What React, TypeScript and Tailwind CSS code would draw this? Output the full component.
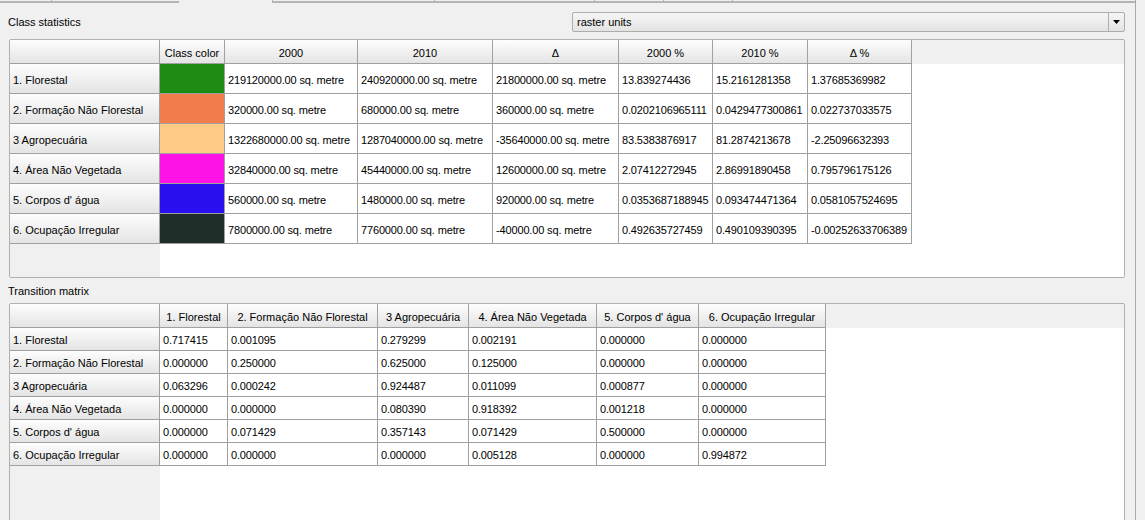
const stats = [
  { name: '1. Florestal', color: '#1f8a14', v: ['219120000.00 sq. metre', '240920000.00 sq. metre', '21800000.00 sq. metre', '13.839274436', '15.2161281358', '1.37685369982'] },
  { name: '2. Formação Não Florestal', color: '#f27c4c', v: ['320000.00 sq. metre', '680000.00 sq. metre', '360000.00 sq. metre', '0.0202106965111', '0.0429477300861', '0.022737033575'] },
  { name: '3 Agropecuária', color: '#fdcb86', v: ['1322680000.00 sq. metre', '1287040000.00 sq. metre', '-35640000.00 sq. metre', '83.5383876917', '81.2874213678', '-2.25096632393'] },
  { name: '4. Área Não Vegetada', color: '#ff12e6', v: ['32840000.00 sq. metre', '45440000.00 sq. metre', '12600000.00 sq. metre', '2.07412272945', '2.86991890458', '0.795796175126'] },
  { name: "5. Corpos d' água", color: '#2810ee', v: ['560000.00 sq. metre', '1480000.00 sq. metre', '920000.00 sq. metre', '0.0353687188945', '0.093474471364', '0.0581057524695'] },
  { name: '6. Ocupação Irregular', color: '#1f2d29', v: ['7800000.00 sq. metre', '7760000.00 sq. metre', '-40000.00 sq. metre', '0.492635727459', '0.490109390395', '-0.00252633706389'] },
];

const statHeaders = ['Class color', '2000', '2010', 'Δ', '2000 %', '2010 %', 'Δ %'];

const matrix = [
  ['0.717415', '0.001095', '0.279299', '0.002191', '0.000000', '0.000000'],
  ['0.000000', '0.250000', '0.625000', '0.125000', '0.000000', '0.000000'],
  ['0.063296', '0.000242', '0.924487', '0.011099', '0.000877', '0.000000'],
  ['0.000000', '0.000000', '0.080390', '0.918392', '0.001218', '0.000000'],
  ['0.000000', '0.071429', '0.357143', '0.071429', '0.500000', '0.000000'],
  ['0.000000', '0.000000', '0.000000', '0.005128', '0.000000', '0.994872'],
];

const headBtn = 'flex items-center pt-[3px] bg-linear-to-b from-[#fdfdfd] to-[#e4e4e4] border-r border-b border-[#a0a0a0] whitespace-nowrap overflow-hidden';
const cell = 'flex items-center pl-[3px] bg-white border-r border-b border-[#a0a0a0] whitespace-nowrap overflow-hidden tracking-[-0.15px]';

const App = () => {
  return (
    <div className="w-[1145px] h-[520px] bg-[#f0f0f0] overflow-hidden font-['Liberation_Sans',Arial,sans-serif] text-[11px] text-black">
      <div className="w-[1136px] h-full border-r border-[#a9a9a9] flex flex-col">
        {/* tab strip */}
        <div className="flex h-[3px] shrink-0">
          <div className="w-[52px] border-b-2 border-r border-[#b4b4b4]" />
          <div className="w-[127px] border-b-2 border-[#b4b4b4]" />
          <div className="w-[93px]" />
          <div className="w-[163px] border-b-2 border-l border-r border-[#b4b4b4]" />
          <div className="w-[160px] border-b-2 border-r border-[#b4b4b4]" />
          <div className="w-[69px] border-b-2 border-r border-[#b4b4b4]" />
          <div className="w-[69px] border-b-2 border-r border-[#b4b4b4]" />
          <div className="flex-1 border-b-2 border-[#b4b4b4]" />
        </div>

        <div className="flex items-center h-[20px] mt-[9px] shrink-0">
          <div className="pl-[8px] pt-[1px] w-[572px]">Class statistics</div>
          <div className="flex w-[553px] h-[20px] border border-[#acacac] rounded-[2px] bg-linear-to-b from-[#f6f6f6] to-[#e3e3e3]">
            <div className="flex-1 flex items-center pl-[4px] pt-[1px]">raster units</div>
            <div className="w-[16px] border-l border-[#acacac] flex items-center justify-center">
              <svg width="7" height="4" viewBox="0 0 7 4">
                <path d="M0 0h7L3.5 4z" fill="#000" />
              </svg>
            </div>
          </div>
        </div>

        {/* class statistics table */}
        <div className="ml-[9px] mt-[7px] w-[1116px] h-[239px] shrink-0 border border-[#b0b0b0] rounded-[2px] bg-[#f0f0f0] overflow-hidden grid grid-cols-[150px_65px_133px_135px_126px_94px_95px_104px_1fr] grid-rows-[24px_repeat(6,30px)_1fr]">
          <div className={headBtn} />
          {statHeaders.map((h) => (
            <div key={h} className={`${headBtn} justify-center`}>{h}</div>
          ))}
          <div className="bg-[#f0f0f0]" />
          {stats.map((r) => (
            <div key={r.name} className="contents">
              <div className={`${headBtn} pl-[3px]`}>{r.name}</div>
              <div className="border-r border-b border-[#a0a0a0]" style={{ backgroundColor: r.color }} />
              {r.v.map((v, i) => (
                <div key={i} className={`${cell} pt-[3px]`}>{v}</div>
              ))}
              <div className="bg-white" />
            </div>
          ))}
          <div className="bg-[#f0f0f0]" />
          <div className="col-span-8 bg-white" />
        </div>

        <div className="h-[25px] flex items-center pl-[8px] pt-[2px] shrink-0">Transition matrix</div>

        {/* transition matrix table */}
        <div className="ml-[9px] w-[1116px] h-[240px] shrink-0 border border-[#b0b0b0] rounded-[2px] bg-[#f0f0f0] overflow-hidden grid grid-cols-[150px_68px_150px_91px_128px_102px_127px_1fr] grid-rows-[24px_repeat(6,23px)_1fr]">
          <div className={headBtn} />
          {stats.map((r) => (
            <div key={r.name} className={`${headBtn} justify-center`}>{r.name}</div>
          ))}
          <div className="bg-[#f0f0f0]" />
          {matrix.map((row, ri) => (
            <div key={ri} className="contents">
              <div className={`${headBtn} pl-[3px] pt-[2px]`}>{stats[ri].name}</div>
              {row.map((v, i) => (
                <div key={i} className={`${cell} pt-[2px]`}>{v}</div>
              ))}
              <div className="bg-white" />
            </div>
          ))}
          <div className="bg-[#f0f0f0]" />
          <div className="col-span-7 bg-white" />
        </div>
      </div>
    </div>
  );
};

export default App;
